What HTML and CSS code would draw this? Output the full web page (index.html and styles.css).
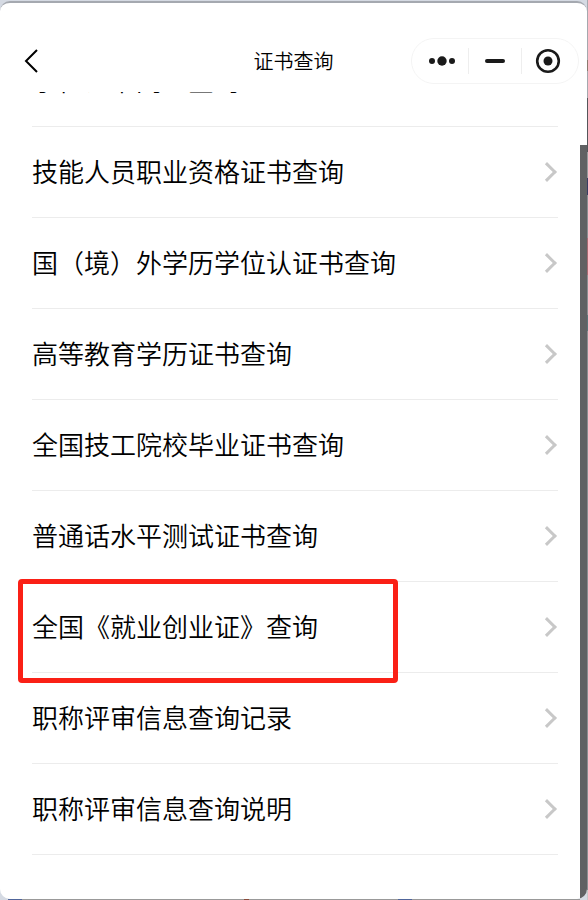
FILE: index.html
```html
<!DOCTYPE html>
<html lang="zh-CN">
<head>
  <meta charset="UTF-8">
  <meta name="viewport" content="width=device-width, initial-scale=1">
  <title>证书查询</title>
  <link rel="stylesheet" href="styles.css">
</head>
<body>
  <div class="window">
    <header class="navbar">
      <button class="back" type="button" aria-label="返回">
        <svg width="14" height="24" viewBox="0 0 14 24"><path d="M13 1 L2 12 L13 23"/></svg>
      </button>
      <h1>证书查询</h1>
      <div class="capsule">
        <button type="button" aria-label="更多">
          <svg width="28" height="28" viewBox="0 0 28 28"><circle cx="4" cy="14" r="3"/><circle cx="14" cy="14" r="4.7"/><circle cx="24" cy="14" r="3"/></svg>
        </button>
        <button type="button" aria-label="最小化">
          <svg width="28" height="28" viewBox="0 0 28 28"><rect x="4" y="12" width="20" height="4" rx="2"/></svg>
        </button>
        <button type="button" aria-label="关闭">
          <svg width="28" height="28" viewBox="0 0 28 28"><circle class="ring" cx="14" cy="14" r="10.8"/><circle cx="14" cy="14" r="4.5"/></svg>
        </button>
      </div>
    </header>

    <main class="content">
      <nav class="list">
        <a href="#">学位证书网上查询</a>
        <a href="#">技能人员职业资格证书查询</a>
        <a href="#">国（境）外学历学位认证书查询</a>
        <a href="#">高等教育学历证书查询</a>
        <a href="#">全国技工院校毕业证书查询</a>
        <a href="#">普通话水平测试证书查询</a>
        <a href="#" class="marked">全国《就业创业证》查询</a>
        <a href="#">职称评审信息查询记录</a>
        <a href="#">职称评审信息查询说明</a>
      </nav>
      <div class="scrim"></div>
    </main>
  </div>
</body>
</html>
```

FILE: styles.css
```css
*, *::before, *::after { box-sizing: border-box; margin: 0; padding: 0 }

:root {
  --text: #000;
  --line: #ececec;
  --mark: #fa2016;
  --scrim: #606163;
}

/* the desktop shows a little round the window */
body {
  height: 100vh;
  padding: 1px 1px 1px 0;
  font-family: "Noto Sans CJK SC", sans-serif;
  font-weight: 350;
  color: var(--text);
  background:
    linear-gradient(#50659a, #50659a) 8px 100% / 14px 1px no-repeat,
    linear-gradient(#8a4a3a, #8a4a3a) 244px 100% / 5px 1px no-repeat,
    linear-gradient(#50659a, #50659a) 398px 100% / 14px 1px no-repeat,
    linear-gradient(#999, #999) 12px 100% / calc(100% - 20px) 1px no-repeat,
    linear-gradient(#a5a8ae 60px, #8a7a70 60px 71px, #a5a8ae 71px 98px,
      #55565a 98px 152px, #97999b 152px 178px, #3a3c62 178px 195px,
      #8b8d90 195px 238px, #a56a72 238px 275px, #8b8d90 275px 315px,
      #5d7478 315px 331px, #8b8d90 331px 890px, #c8c8c8 890px) 100% 0 / 1px 100% no-repeat,
    #d5dae3;
}

.window {
  display: flex;
  flex-direction: column;
  height: 100%;
  overflow: hidden;
  border-top: 2px solid #a5a9b0;
  border-radius: 10px;
  background: #fff;
}

.navbar {
  display: grid;
  grid-template-columns: 1fr auto 1fr;
  align-items: center;
  flex: none;
  height: 89px;
  padding: 26px 8px 0;
}
.navbar h1 {
  font-size: 20px;
  font-weight: 350;
  line-height: 28px;
}

button {
  display: flex;
  align-items: center;
  justify-content: center;
  border: none;
  background: none;
  cursor: pointer;
}
.back {
  justify-self: start;
  margin-left: 16px;
}
.back path {
  fill: none;
  stroke: #000;
  stroke-width: 2;
}

.capsule {
  display: flex;
  align-items: center;
  justify-self: end;
  width: 168px;
  height: 46px;
  padding: 0 4px;
  border: 1px solid #f4f4f4;
  border-radius: 23px;
}
.capsule button {
  flex: 1;
  height: 26px;
  fill: #1a1a1a;
}
.capsule button + button {
  border-left: 1px solid #eee;
}
.capsule .ring {
  fill: none;
  stroke: #1a1a1a;
  stroke-width: 2.6;
}

.content {
  display: flex;
  flex: 1;
  min-height: 0;
  overflow: hidden;
}
/* list is scrolled up a little under the navbar */
.list {
  flex: 1;
  margin-top: -56px;
  padding: 0 22px 0 32px;
}
.list a {
  position: relative;
  display: flex;
  align-items: center;
  justify-content: space-between;
  height: 91px;
  padding-bottom: 3px;
  border-bottom: 1px solid var(--line);
  font-size: 26px;
  line-height: 36px;
  color: inherit;
  text-decoration: none;
}
.list a::after {
  content: "";
  width: 14px;
  height: 14px;
  margin: 3px 4px 0 0;
  border-top: 3px solid #c8c8c8;
  border-right: 3px solid #c8c8c8;
  transform: rotate(45deg);
}
.list .marked::before {
  content: "";
  position: absolute;
  top: -3px;
  left: -14px;
  width: 380px;
  height: 104px;
  border: 5px solid var(--mark);
  border-radius: 4px;
}

.scrim {
  width: 7px;
  margin-top: 53px;
  background: var(--scrim);
}
```
